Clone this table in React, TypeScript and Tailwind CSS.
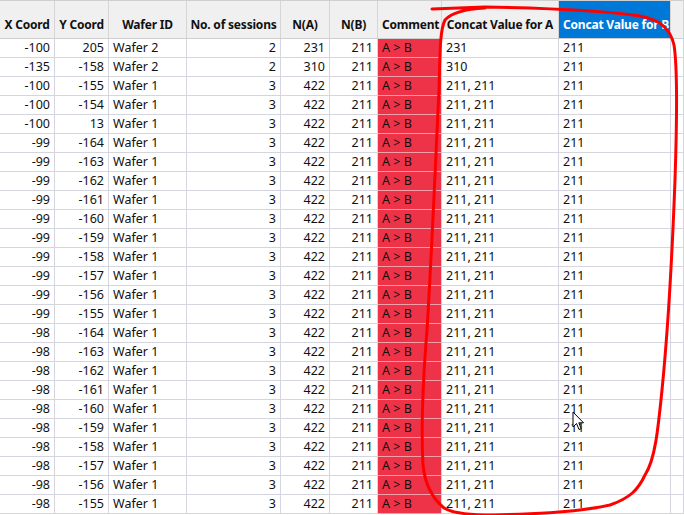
import React from "react";

type Row = {
  x: number;
  y: number;
  wafer: string;
  sessions: number;
  na: number;
  nb: number;
  concatA: string;
  concatB: string;
};

const rows: Row[] = [
  { x: -100, y: 205, wafer: "Wafer 2", sessions: 2, na: 231, nb: 211, concatA: "231", concatB: "211" },
  { x: -135, y: -158, wafer: "Wafer 2", sessions: 2, na: 310, nb: 211, concatA: "310", concatB: "211" },
  ...[
    [-100, -155],
    [-100, -154],
    [-100, 13],
    [-99, -164],
    [-99, -163],
    [-99, -162],
    [-99, -161],
    [-99, -160],
    [-99, -159],
    [-99, -158],
    [-99, -157],
    [-99, -156],
    [-99, -155],
    [-98, -164],
    [-98, -163],
    [-98, -162],
    [-98, -161],
    [-98, -160],
    [-98, -159],
    [-98, -158],
    [-98, -157],
    [-98, -156],
    [-98, -155],
  ].map(([x, y]) => ({
    x,
    y,
    wafer: "Wafer 1",
    sessions: 3,
    na: 422,
    nb: 211,
    concatA: "211, 211",
    concatB: "211",
  })),
];

const cols = "grid grid-cols-[55px_54px_78px_94px_49px_48px_64px_117px_112px_13px]";
const hd = "flex items-end justify-center pb-[4px] border-r border-[#d6d6d6] whitespace-nowrap overflow-hidden";
const cell = "h-[19px] border-r border-b border-[#d5d5e0] flex items-center whitespace-nowrap overflow-hidden";
const num = `${cell} justify-end pr-[4px]`;
const txt = `${cell} pl-[4px]`;

export default function App() {
  return (
    <div className="relative w-[684px] h-[515px] overflow-hidden bg-white text-[12.5px] text-[#111] font-['Segoe_UI','Noto_Sans',sans-serif]">
      {/* header */}
      <div className={`${cols} h-[39px] bg-[#f0f0f0] border-t border-b border-[#cfcfcf] font-bold text-[12px] tracking-[-0.2px]`}>
        <div className={hd}>X Coord</div>
        <div className={hd}>Y Coord</div>
        <div className={hd}>Wafer ID</div>
        <div className={hd}>No. of sessions</div>
        <div className={hd}>N(A)</div>
        <div className={hd}>N(B)</div>
        <div className={`${hd} justify-start pl-[4px]`}>Comment</div>
        <div className={hd}>Concat Value for A</div>
        <div className={`${hd} justify-start pl-[4px] bg-[#0078d7] text-white`}>Concat Value for B</div>
        <div className={hd} />
      </div>

      {/* body */}
      {rows.map((r, i) => (
        <div key={i} className={cols}>
          <div className={num}>{r.x}</div>
          <div className={num}>{r.y}</div>
          <div className={txt}>{r.wafer}</div>
          <div className={num}>{r.sessions}</div>
          <div className={num}>{r.na}</div>
          <div className={num}>{r.nb}</div>
          <div className={`${txt} bg-[#ee3348] border-b-[#f3a0aa]`}>A &gt; B</div>
          <div className={txt}>{r.concatA}</div>
          <div className={txt}>{r.concatB}</div>
          <div className={cell} />
        </div>
      ))}

      {/* hand-drawn annotation */}
      <svg className="absolute inset-0 pointer-events-none" width="684" height="515" viewBox="0 0 684 515">
        <path
          d="M432,9 L485,7 C540,8 600,10 640,16 C660,20 670,28 674,45 C678,70 677,120 675,180 C672,260 668,330 662,390 C658,430 655,460 645,475 C638,490 630,498 610,505 C580,512 540,514 493,515 C470,515 452,513 444,508 C432,498 425,485 423,465 C421,430 423,380 427,330 C432,250 436,150 439,90 C440,50 440,30 445,20 C452,12 465,9 485,8"
          fill="none"
          stroke="#ff0000"
          strokeWidth="3"
          strokeLinecap="round"
          strokeLinejoin="round"
        />
        {/* mouse cursor */}
        <path
          d="M573,412 L573,427 L576.5,423.5 L579,429.5 L581.2,428.6 L578.8,422.8 L583.5,422.8 Z"
          fill="#fff"
          stroke="#000"
          strokeWidth="1"
          strokeLinejoin="round"
        />
      </svg>
    </div>
  );
}
